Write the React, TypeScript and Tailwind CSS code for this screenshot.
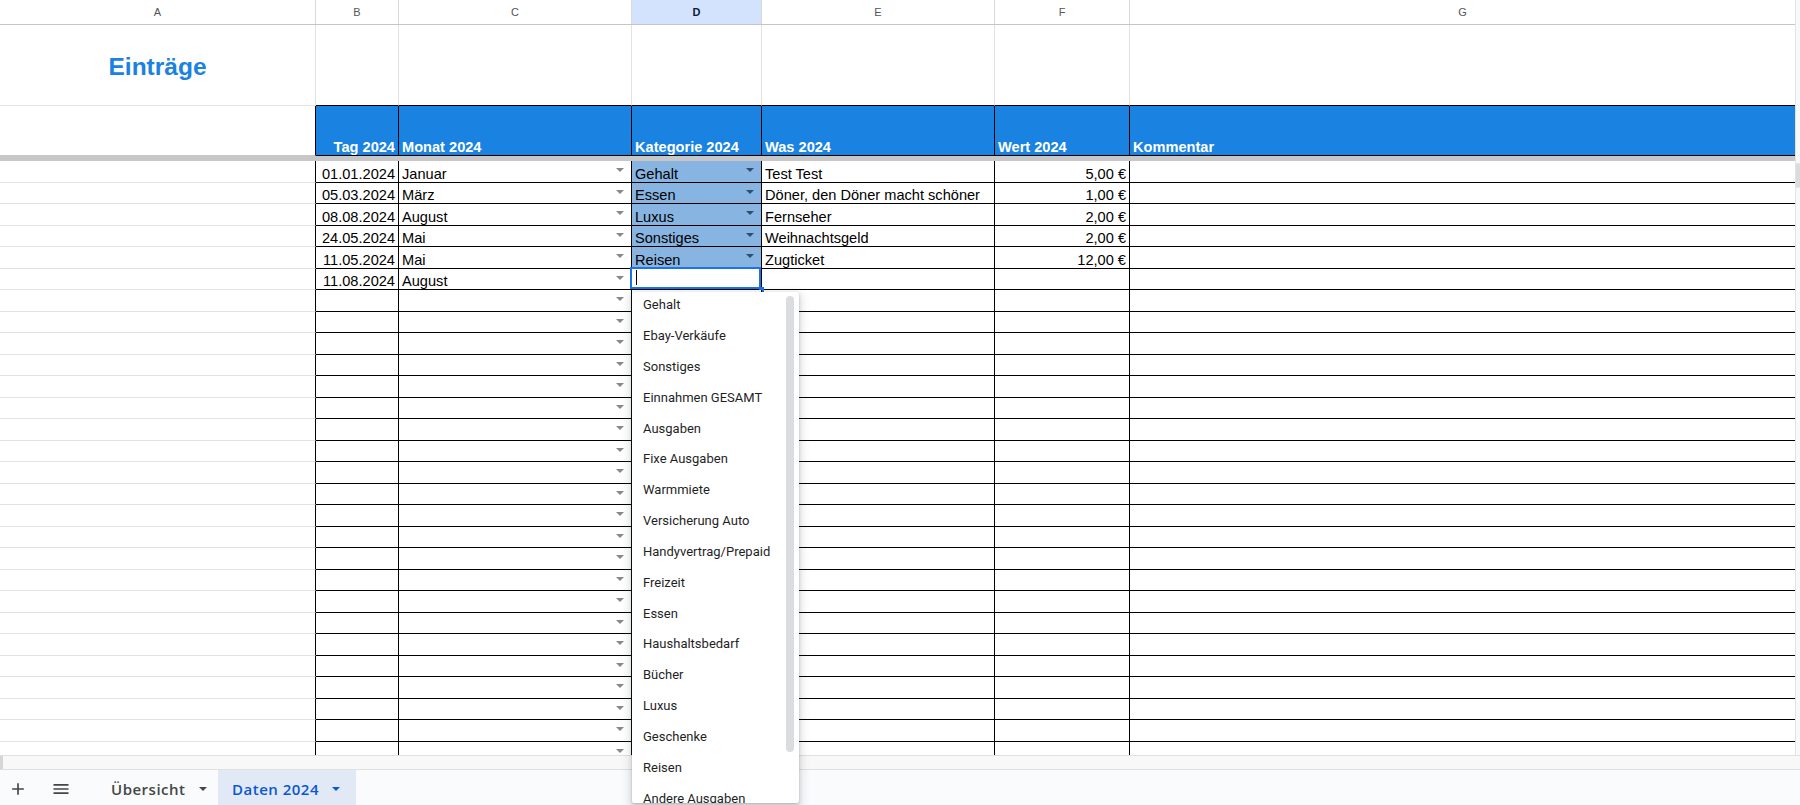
import React from "react";

const COLS = ["w-[316px]", "w-[83px]", "w-[233px]", "w-[130px]", "w-[233px]", "w-[135px]", "w-[665px]"];
const LETTERS = ["A", "B", "C", "D", "E", "F", "G"];

const DATA: string[][] = [
  ["01.01.2024", "Januar", "Gehalt", "Test Test", "5,00 €"],
  ["05.03.2024", "März", "Essen", "Döner, den Döner macht schöner", "1,00 €"],
  ["08.08.2024", "August", "Luxus", "Fernseher", "2,00 €"],
  ["24.05.2024", "Mai", "Sonstiges", "Weihnachtsgeld", "2,00 €"],
  ["11.05.2024", "Mai", "Reisen", "Zugticket", "12,00 €"],
  ["11.08.2024", "August", "", "", ""],
];

const ITEMS = [
  "Gehalt",
  "Ebay-Verkäufe",
  "Sonstiges",
  "Einnahmen GESAMT",
  "Ausgaben",
  "Fixe Ausgaben",
  "Warmmiete",
  "Versicherung Auto",
  "Handyvertrag/Prepaid",
  "Freizeit",
  "Essen",
  "Haushaltsbedarf",
  "Bücher",
  "Luxus",
  "Geschenke",
  "Reisen",
  "Andere Ausgaben",
  "Sparen",
];

function Tri({ color }: { color: string }) {
  return (
    <svg width="8" height="4" viewBox="0 0 8 4" className="shrink-0 block">
      <path d="M0 0H8L4 4Z" fill={color} />
    </svg>
  );
}

function DataRow({ r, idx }: { r: string[]; idx: number }) {
  const [b, c, d, e, f] = r;
  const blue = d !== "";
  const selected = idx === 5;
  return (
    <div className="flex h-[21.5px] shrink-0 text-[14.6px] leading-none">
      <div className="w-[316px] shrink-0 border-r border-r-black border-b border-b-[#e2e2e2]" />
      <div className="w-[83px] shrink-0 border-r border-b border-black flex items-end justify-end pr-[3px] whitespace-nowrap">
        {b}
      </div>
      <div className="w-[233px] shrink-0 border-r border-b border-black flex items-end pl-[3px]">
        <span className="flex-1 whitespace-nowrap">{c}</span>
        <span className="self-start mt-[7px] mr-[7px]">
          <Tri color="#888888" />
        </span>
      </div>
      <div
        className={`w-[130px] shrink-0 border-r border-b border-black flex items-end pl-[3px] relative ${
          blue ? "bg-[#87b4e0]" : "bg-white"
        }`}
      >
        {blue && <span className="flex-1 whitespace-nowrap">{d}</span>}
        {blue && (
          <span className="self-start mt-[7px] mr-[7px]">
            <Tri color="#2f4e6e" />
          </span>
        )}
        {selected && (
          <>
            <div className="w-px h-[15px] bg-black mb-[4px] ml-[1px]" />
            <div className="absolute -left-[2px] -top-[2px] right-0 bottom-0 border-2 border-[#1a73e8]" />
            <div className="absolute -right-[3px] -bottom-[3px] w-[5px] h-[5px] bg-[#1a73e8]" />
          </>
        )}
      </div>
      <div className="w-[233px] shrink-0 border-r border-b border-black flex items-end pl-[3px] whitespace-nowrap">
        {e}
      </div>
      <div className="w-[135px] shrink-0 border-r border-b border-black flex items-end justify-end pr-[3px] whitespace-nowrap">
        {f}
      </div>
      <div className="w-[665px] shrink-0 border-b border-black" />
    </div>
  );
}

function HeaderCell({ w, text, right, last }: { w: string; text: string; right?: boolean; last?: boolean }) {
  return (
    <div
      className={`${w} shrink-0 bg-[#1a82e0] border-b border-black ${last ? "" : "border-r"} flex items-end ${
        right ? "justify-end pr-[3px]" : "pl-[3px]"
      } text-white font-bold text-[14.6px] leading-none whitespace-nowrap`}
    >
      {text}
    </div>
  );
}

export default function App() {
  const rows = Array.from({ length: 30 }, (_, i) => DATA[i] ?? ["", "", "", "", ""]);
  return (
    <div className="w-[1800px] h-[805px] relative overflow-hidden bg-white font-['Liberation_Sans',Arial,sans-serif] text-black">
      <div className="flex h-[755px]">
        <div className="w-[1795px] shrink-0 flex flex-col">
          {/* column letters */}
          <div className="flex h-[25px] shrink-0 border-b border-[#c4c7c5]">
            {LETTERS.map((l, i) => (
              <div
                key={l}
                className={`${COLS[i]} shrink-0 ${i < 6 ? "border-r border-[#d9d9d9]" : ""} flex items-center justify-center text-[11px] ${
                  i === 3 ? "bg-[#d3e3fd] font-bold text-[#0b1d3a]" : "text-[#555555]"
                }`}
              >
                {l}
              </div>
            ))}
          </div>

          {/* title row */}
          <div className="flex h-[81px] shrink-0">
            <div className="w-[316px] shrink-0 border-r border-b border-[#e2e2e2] flex items-center justify-center pt-[4px] text-[24.5px] font-bold text-[#1a82e0]">
              Einträge
            </div>
            <div className="w-[83px] shrink-0 border-r border-r-[#e2e2e2] border-b border-b-black" />
            <div className="w-[233px] shrink-0 border-r border-r-[#e2e2e2] border-b border-b-black" />
            <div className="w-[130px] shrink-0 border-r border-r-[#e2e2e2] border-b border-b-black" />
            <div className="w-[233px] shrink-0 border-r border-r-[#e2e2e2] border-b border-b-black" />
            <div className="w-[135px] shrink-0 border-r border-r-[#e2e2e2] border-b border-b-black" />
            <div className="w-[665px] shrink-0 border-b border-b-black" />
          </div>

          {/* header row */}
          <div className="flex h-[50px] shrink-0">
            <div className="w-[316px] shrink-0 border-r border-r-black border-b border-b-[#c7c7c7]" />
            <HeaderCell w="w-[83px]" text="Tag 2024" right />
            <HeaderCell w="w-[233px]" text="Monat 2024" />
            <HeaderCell w="w-[130px]" text="Kategorie 2024" />
            <HeaderCell w="w-[233px]" text="Was 2024" />
            <HeaderCell w="w-[135px]" text="Wert 2024" />
            <HeaderCell w="w-[665px]" text="Kommentar" last />
          </div>

          {/* frozen divider */}
          <div className="h-[5px] shrink-0 bg-[#c7c7c7]" />

          {/* data */}
          <div className="flex-1 overflow-hidden flex flex-col">
            {rows.map((r, i) => (
              <DataRow key={i} r={r} idx={i} />
            ))}
          </div>
        </div>

        {/* vertical scrollbar */}
        <div className="w-[5px] shrink-0 bg-[#f8f9fa] border-l border-[#e3e3e3] pt-[163px]">
          <div className="h-[25px] w-[4px] rounded-full bg-[#dadce0]" />
        </div>
      </div>

      {/* horizontal scrollbar strip */}
      <div className="h-[14px] border-t border-[#e0e0e0] bg-[#f8f8f8] flex">
        <div className="w-[3px] h-full bg-[#d5d5d5]" />
      </div>

      {/* sheet tab bar */}
      <div className="h-[36px] border-t border-[#e0e0e0] bg-[#f9fbfd] flex items-stretch pl-[8px] font-['Open_Sans',sans-serif] text-[15px] font-semibold tracking-[0.5px]">
        <div className="flex items-center pt-[3px]">
          <svg width="20" height="20" viewBox="0 0 24 24" fill="#444746">
            <path d="M19 13h-6v6h-2v-6H5v-2h6V5h2v6h6v2z" />
          </svg>
        </div>
        <div className="flex items-center ml-[23px] pt-[3px]">
          <svg width="20" height="20" viewBox="0 0 24 24" fill="#444746">
            <path d="M3 18h18v-2H3v2zm0-5h18v-2H3v2zm0-7v2h18V6H3z" />
          </svg>
        </div>
        <div className="ml-[26px] w-[121px] flex items-center pl-[14px] pt-[3px] text-[#444746]">
          <span>Übersicht</span>
          <span className="ml-[13px]">
            <Tri color="#444746" />
          </span>
        </div>
        <div className="w-[138px] flex items-center pl-[14px] pt-[3px] bg-[#e1e9f7] text-[#0b57d0]">
          <span>Daten 2024</span>
          <span className="ml-[13px]">
            <Tri color="#0b57d0" />
          </span>
        </div>
      </div>

      {/* dropdown list */}
      <div className="absolute left-[632px] top-[292px] w-[167px] h-[511px] bg-white overflow-hidden rounded-[2px] shadow-[0_1px_3px_rgba(60,64,67,0.3),0_4px_8px_3px_rgba(60,64,67,0.15)] font-['Roboto',sans-serif] text-[13px] text-[#1f1f1f]">
        <div className="-mt-[2.5px]">
          {ITEMS.map((it) => (
            <div key={it} className="h-[30.85px] flex items-center pl-[11px] whitespace-nowrap">
              {it}
            </div>
          ))}
        </div>
        <div className="absolute top-[4px] right-[5px] w-[8px] h-[456px] rounded-full bg-[#dadce0]" />
      </div>
    </div>
  );
}
